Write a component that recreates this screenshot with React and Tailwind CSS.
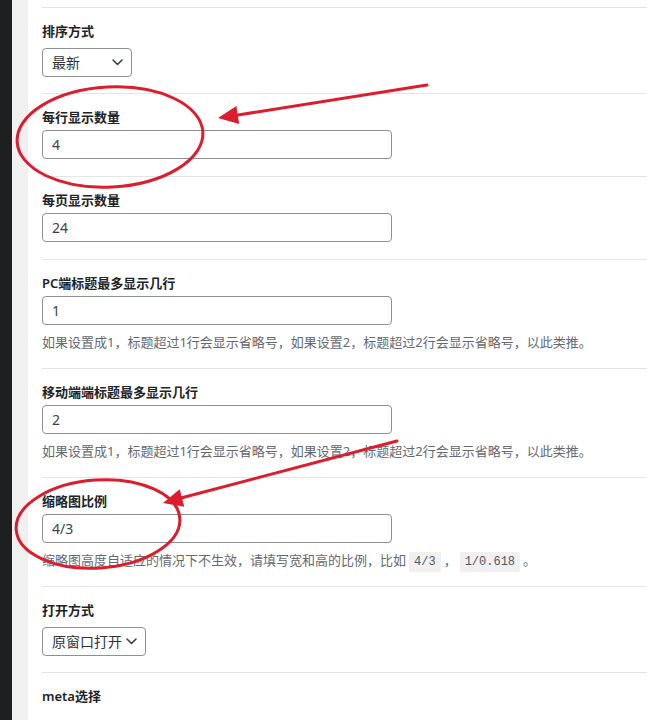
import React from "react";

const sans = "font-['Noto_Sans','Noto_Sans_CJK_SC',sans-serif]";

function Chevron() {
  return (
    <svg width="11" height="7" viewBox="0 0 11 7" fill="none">
      <path d="M1 1l4.5 4.5L10 1" stroke="#3c434a" strokeWidth="1.6" strokeLinecap="round" strokeLinejoin="round" />
    </svg>
  );
}

function Label({ children }) {
  return <div className="text-[13px] leading-[20px] font-semibold text-[#1d2327]">{children}</div>;
}

function TextInput({ value }) {
  return (
    <div className="mt-[3px] flex h-[29px] w-[350px] items-center rounded-[4px] border border-[#8c8f94] bg-white pl-[9px] text-[14px] text-[#3c434a]">
      {value}
    </div>
  );
}

function Select({ value, width }) {
  return (
    <div
      className={`mt-[7px] flex h-[29px] items-center justify-between rounded-[4px] border border-[#8c8f94] bg-white pl-[9px] pr-[8px] text-[14px] text-[#2c3338] ${width}`}
    >
      <span>{value}</span>
      <Chevron />
    </div>
  );
}

function Desc({ children }) {
  return <p className="mt-[7px] h-[20px] text-[13px] leading-[20px] text-[#646970]">{children}</p>;
}

function Code({ children }) {
  return (
    <code className="mx-[3px] rounded-[2px] bg-[#f0f0f1] px-[5px] py-[3px] font-['Liberation_Mono',monospace] text-[12px] leading-[14px] text-[#50575e]">
      {children}
    </code>
  );
}

function Row({ children, pb = "pb-[17px]" }) {
  return <div className={`border-t border-[#e2e4e7] pt-[13px] ${pb}`}>{children}</div>;
}

const tip = "如果设置成1，标题超过1行会显示省略号，如果设置2，标题超过2行会显示省略号，以此类推。";

// red pen marks drawn over the form
function Marks() {
  const red = "#dc1d2d";
  return (
    <svg className="pointer-events-none absolute left-0 top-0" width="647" height="720" viewBox="0 0 647 720" fill="none">
      <ellipse cx="110" cy="137" rx="93" ry="50" transform="rotate(-3 110 137)" stroke={red} strokeWidth="3" />
      <path d="M427 85 L238 115" stroke={red} strokeWidth="3" strokeLinecap="round" />
      <path d="M218 118 L236.4 106 L239.2 124 Z" fill={red} />

      <ellipse cx="98" cy="524" rx="82" ry="44" transform="rotate(-4 98 524)" stroke={red} strokeWidth="3" />
      <path d="M397 441 L181 498" stroke={red} strokeWidth="3" strokeLinecap="round" />
      <path d="M163 503 L179.7 489.3 L184.3 506.7 Z" fill={red} />
    </svg>
  );
}

export default function App() {
  return (
    <div className={`relative flex h-[720px] w-[647px] overflow-hidden bg-white ${sans}`}>
      <div className="w-[12px] shrink-0 bg-[#1e1f21]" />
      <div className="w-[16px] shrink-0 bg-[#f0f0f1]" />
      <div className="flex-1 pl-[14px] pt-[7px]">
        <Row pb="pb-[16px]">
          <Label>排序方式</Label>
          <Select value="最新" width="w-[90px]" />
        </Row>
        <Row>
          <Label>每行显示数量</Label>
          <TextInput value="4" />
        </Row>
        <Row>
          <Label>每页显示数量</Label>
          <TextInput value="24" />
        </Row>
        <Row pb="pb-[16px]">
          <Label>PC端标题最多显示几行</Label>
          <TextInput value="1" />
          <Desc>{tip}</Desc>
        </Row>
        <Row pb="pb-[16px]">
          <Label>移动端端标题最多显示几行</Label>
          <TextInput value="2" />
          <Desc>{tip}</Desc>
        </Row>
        <Row pb="pb-[16px]">
          <Label>缩略图比例</Label>
          <TextInput value="4/3" />
          <Desc>
            缩略图高度自适应的情况下不生效，请填写宽和高的比例，比如<Code>4/3</Code>，<Code>1/0.618</Code>。
          </Desc>
        </Row>
        <Row pb="pb-[16px]">
          <Label>打开方式</Label>
          <Select value="原窗口打开" width="w-[104px]" />
        </Row>
        <Row>
          <Label>meta选择</Label>
        </Row>
      </div>
      <Marks />
    </div>
  );
}
